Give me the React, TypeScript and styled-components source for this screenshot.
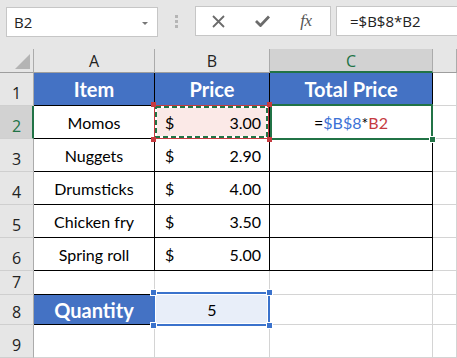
import React from 'react';
import styled, { createGlobalStyle, css } from 'styled-components';

const Global = createGlobalStyle`
  html, body { margin: 0; padding: 0; background: #fff; }
  body { font-family: Lato, "Open Sans", sans-serif; }
  * { box-sizing: border-box; }
`;

const GREEN = '#217346';
const BLUE_HDR = '#4472c4';
const SEL_BLUE = '#3a72cc';
const REF_RED = '#c63a3f';
const GRID = '#d4d4d4';

const Page = styled.div`
  width: 457px;
  height: 358px;
  overflow: hidden;
  background: #e6e6e6;
  display: flex;
  flex-direction: column;
`;

const Toolbar = styled.div`
  height: 49px;
  flex: none;
  padding: 6px 0 0 6px;
  display: flex;
  align-items: flex-start;
`;

const NameBox = styled.div`
  width: 152px;
  height: 30px;
  margin-top: 1px;
  background: #fff;
  border: 1px solid #c6c6c6;
  display: flex;
  align-items: center;
  justify-content: space-between;
  padding: 0 9px 0 7px;
  font: 15px "Open Sans", sans-serif;
  color: #222;
`;

const DropArrow = styled.span`
  width: 0;
  height: 0;
  border-left: 3px solid transparent;
  border-right: 3px solid transparent;
  border-top: 3px solid #777;
  margin-top: 2px;
`;

const Grip = styled.div`
  margin: 9px 0 0 17px;
  width: 3px;
  display: flex;
  flex-direction: column;
  gap: 2px;
`;

const GripDot = styled.span`
  width: 3px;
  height: 3px;
  background: #b5b5b5;
`;

const FxButtons = styled.div`
  margin-left: 17px;
  width: 136px;
  height: 30px;
  background: #fff;
  border: 1px solid #c6c6c6;
  display: flex;
  align-items: center;
  padding-left: 16px;
`;

const FxBtn = styled.span<{ $w: number }>`
  width: ${p => p.$w}px;
  display: flex;
  align-items: center;
  color: #666;
`;

const FxGlyph = styled.span`
  font: italic 17px "Liberation Serif", serif;
  color: #555;
  letter-spacing: -0.5px;
`;

const FormulaInput = styled.div`
  margin-left: 5px;
  flex: 1;
  height: 30px;
  background: #fff;
  border: 1px solid #c6c6c6;
  border-right: none;
  display: flex;
  align-items: center;
  padding-left: 13px;
  font: 15px "Open Sans", sans-serif;
  color: #222;
`;

const Sheet = styled.div`
  flex: 1;
  display: grid;
  grid-template-columns: 34px 121px 115px 163px 1fr;
  grid-template-rows: 24px repeat(6, 33px) 24px 30px 33px;
  background: #fff;
`;

const Corner = styled.div`
  background: #e6e6e6;
  border-right: 1px solid #ababab;
  border-bottom: 1px solid #9e9e9e;
  display: flex;
  align-items: flex-end;
  justify-content: flex-end;
  padding: 0 3px 3px 0;
`;

const CornerTri = styled.span`
  width: 0;
  height: 0;
  border-left: 15px solid transparent;
  border-bottom: 15px solid #b4b4b4;
`;

const ColHeader = styled.div<{ $sel?: boolean }>`
  background: ${p => (p.$sel ? '#d2d2d2' : '#e6e6e6')};
  border-right: 1px solid #ababab;
  border-bottom: ${p => (p.$sel ? `2px solid ${GREEN}` : '1px solid #9e9e9e')};
  display: flex;
  align-items: center;
  justify-content: center;
  padding-top: ${p => (p.$sel ? 1 : 0)}px;
  font: 16px "Open Sans", sans-serif;
  color: ${p => (p.$sel ? GREEN : '#222')};
`;

const RowHeader = styled.div<{ $sel?: boolean }>`
  background: ${p => (p.$sel ? '#d2d2d2' : '#e6e6e6')};
  border-right: ${p => (p.$sel ? `2px solid ${GREEN}` : '1px solid #ababab')};
  border-bottom: 1px solid #cfcfcf;
  display: flex;
  align-items: flex-end;
  justify-content: center;
  padding-bottom: 4px;
  padding-left: ${p => (p.$sel ? 1 : 0)}px;
  font: 16px/16px "Open Sans", sans-serif;
  color: ${p => (p.$sel ? GREEN : '#222')};
`;

type Edge = 'black' | 'grid';

const Cell = styled.div<{
  $r?: Edge;
  $b?: Edge;
  $fill?: string;
  $head?: boolean;
  $split?: boolean;
}>`
  position: relative;
  background: ${p => p.$fill || '#fff'};
  border-right: 1px solid ${p => (p.$r === 'black' ? '#000' : GRID)};
  border-bottom: 1px solid ${p => (p.$b === 'black' ? '#000' : GRID)};
  display: flex;
  align-items: center;
  justify-content: ${p => (p.$split ? 'space-between' : 'center')};
  padding: ${p => (p.$split ? '0 8px 0 10px' : '0')};
  font-size: 16px;
  color: #000;
  ${p =>
    p.$head &&
    css`
      font-weight: 700;
      font-size: 20px;
      color: #fff;
    `}
`;

const RefBox = styled.div`
  position: absolute;
  top: -1px;
  left: -1px;
  right: 0;
  bottom: -1px;
  border: 1px solid ${REF_RED};
  z-index: 3;
  pointer-events: none;
`;

const AntsFrame = styled.div`
  position: absolute;
  inset: 1px;
`;

const Ants = styled.svg`
  position: absolute;
  top: 0;
  left: 0;
  width: 100%;
  height: 100%;
  overflow: visible;
`;

const Handle = styled.span<{ $c: string; $pos: string; $ring?: boolean }>`
  position: absolute;
  width: ${p => (p.$ring ? 7 : 5)}px;
  height: ${p => (p.$ring ? 7 : 5)}px;
  background: ${p => p.$c};
  border: ${p => (p.$ring ? '1px solid #fff' : 'none')};
  z-index: 5;
  ${p => {
    const o = p.$ring ? -5 : -4;
    const v = p.$pos.includes('t') ? `top:${o}px;` : `bottom:${o}px;`;
    const h = p.$pos.includes('l') ? `left:${o}px;` : `right:${o}px;`;
    return v + h;
  }}
`;

const ActiveBox = styled.div`
  position: absolute;
  top: -2px;
  left: 0;
  right: -1px;
  bottom: -2px;
  border: 2px solid ${GREEN};
  z-index: 2;
  pointer-events: none;
`;

const FillHandle = styled.span`
  position: absolute;
  right: -5px;
  bottom: -5px;
  width: 7px;
  height: 7px;
  background: ${GREEN};
  border: 1px solid #fff;
`;

const QtyBox = styled.div`
  position: absolute;
  top: -3px;
  left: -2px;
  right: -1px;
  bottom: -2px;
  border: 2px solid ${SEL_BLUE};
  box-shadow: inset 0 0 0 1px #fff;
  z-index: 2;
  pointer-events: none;
`;

const Formula = styled.span`
  font-size: 16px;
  color: #000;
`;

const RefBlue = styled.span`
  color: #3c72d6;
`;

const RefRed = styled.span`
  color: ${REF_RED};
`;

const items = [
  ['Momos', '3.00'],
  ['Nuggets', '2.90'],
  ['Drumsticks', '4.00'],
  ['Chicken fry', '3.50'],
  ['Spring roll', '5.00'],
];

export default function App() {
  return (
    <>
      <Global />
      <Page>
        <Toolbar>
          <NameBox>
            <span>B2</span>
            <DropArrow />
          </NameBox>
          <Grip>
            <GripDot />
            <GripDot />
            <GripDot />
          </Grip>
          <FxButtons>
            <FxBtn $w={43}>
              <svg width="13" height="13" viewBox="0 0 13 13">
                <path d="M1 1 L12 12 M12 1 L1 12" stroke="#6b6b6b" strokeWidth="1.8" fill="none" />
              </svg>
            </FxBtn>
            <FxBtn $w={46}>
              <svg width="15" height="12" viewBox="0 0 15 12">
                <path d="M1 6 L5.5 10.5 L14 1.5" stroke="#6b6b6b" strokeWidth="2.8" fill="none" />
              </svg>
            </FxBtn>
            <FxBtn $w={30}>
              <FxGlyph>fx</FxGlyph>
            </FxBtn>
          </FxButtons>
          <FormulaInput>=$B$8*B2</FormulaInput>
        </Toolbar>
        <Sheet>
          <Corner>
            <CornerTri />
          </Corner>
          <ColHeader>A</ColHeader>
          <ColHeader>B</ColHeader>
          <ColHeader $sel>C</ColHeader>
          <ColHeader />

          <RowHeader>1</RowHeader>
          <Cell $r="black" $b="black" $fill={BLUE_HDR} $head>Item</Cell>
          <Cell $r="black" $b="black" $fill={BLUE_HDR} $head>Price</Cell>
          <Cell $r="black" $b="black" $fill={BLUE_HDR} $head>Total Price</Cell>
          <Cell />

          {items.map(([name, price], i) => (
            <React.Fragment key={name}>
              <RowHeader $sel={i === 0}>{i + 2}</RowHeader>
              <Cell $r="black" $b="black">{name}</Cell>
              <Cell $r="black" $b="black" $split $fill={i === 0 ? '#fbe9e7' : undefined}>
                <span>$</span>
                <span>{price}</span>
                {i === 0 && (
                  <RefBox>
                    <AntsFrame>
                      <Ants>
                        <rect x="0" y="0" width="100%" height="100%" fill="none" stroke="#fff" strokeWidth="2" />
                        <rect
                          x="0"
                          y="0"
                          width="100%"
                          height="100%"
                          fill="none"
                          stroke={GREEN}
                          strokeWidth="2"
                          strokeDasharray="5 3"
                        />
                      </Ants>
                    </AntsFrame>
                    <Handle $c={REF_RED} $pos="tl" />
                    <Handle $c={REF_RED} $pos="tr" />
                    <Handle $c={REF_RED} $pos="bl" />
                    <Handle $c={REF_RED} $pos="br" />
                  </RefBox>
                )}
              </Cell>
              <Cell $r="black" $b="black">
                {i === 0 && (
                  <>
                    <Formula>
                      =<RefBlue>$B$8</RefBlue>*<RefRed>B2</RefRed>
                    </Formula>
                    <ActiveBox>
                      <FillHandle />
                    </ActiveBox>
                  </>
                )}
              </Cell>
              <Cell />
            </React.Fragment>
          ))}

          <RowHeader>7</RowHeader>
          <Cell $b="black" />
          <Cell />
          <Cell />
          <Cell />

          <RowHeader>8</RowHeader>
          <Cell $r="black" $b="black" $fill={BLUE_HDR} $head>Quantity</Cell>
          <Cell $fill="#e8eef9">
            5
            <QtyBox>
              <Handle $c={SEL_BLUE} $pos="tl" $ring />
              <Handle $c={SEL_BLUE} $pos="tr" $ring />
              <Handle $c={SEL_BLUE} $pos="bl" $ring />
              <Handle $c={SEL_BLUE} $pos="br" $ring />
            </QtyBox>
          </Cell>
          <Cell />
          <Cell />

          <RowHeader>9</RowHeader>
          <Cell />
          <Cell />
          <Cell />
          <Cell />
        </Sheet>
      </Page>
    </>
  );
}
